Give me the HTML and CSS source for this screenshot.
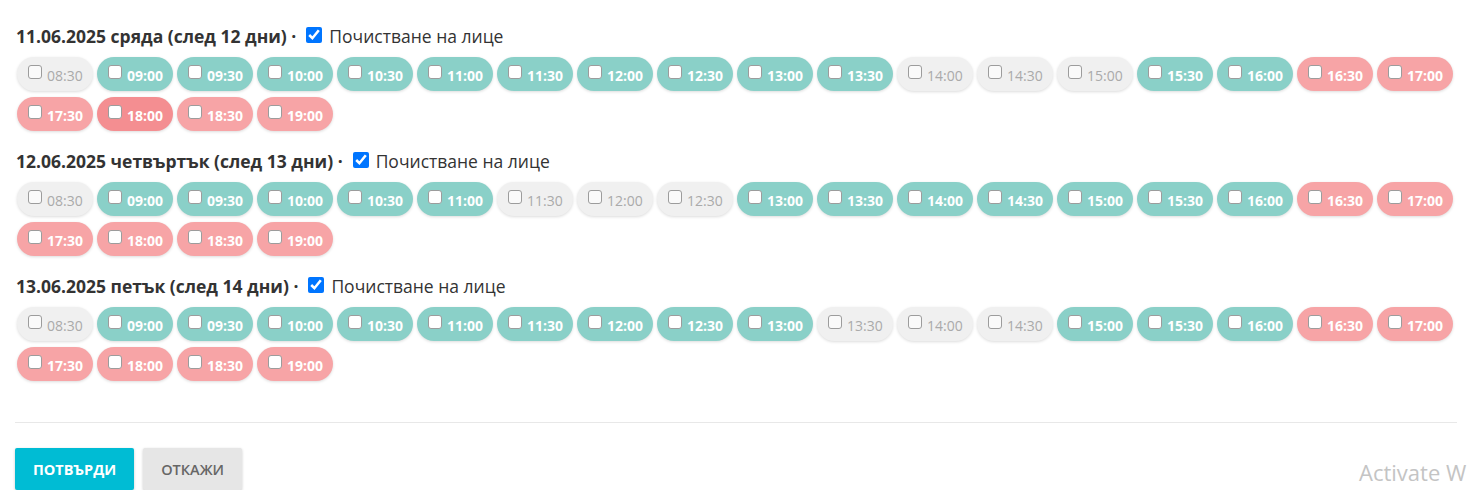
FILE: index.html
```html
<!DOCTYPE html>
<html lang="bg">
<head>
<meta charset="utf-8">
<title>Часове</title>
<link rel="stylesheet" href="styles.css">
</head>
<body>
<div class="page">
  <div class="day">
    <div class="day-head"><span class="date">11.06.2025 сряда (след 12 дни) ·</span><label class="service"><input type="checkbox" checked>Почистване на лице</label></div>
    <div class="slots">
      <label class="slot off"><input type="checkbox"><span>08:30</span></label>
      <label class="slot free"><input type="checkbox"><span>09:00</span></label>
      <label class="slot free"><input type="checkbox"><span>09:30</span></label>
      <label class="slot free"><input type="checkbox"><span>10:00</span></label>
      <label class="slot free"><input type="checkbox"><span>10:30</span></label>
      <label class="slot free"><input type="checkbox"><span>11:00</span></label>
      <label class="slot free"><input type="checkbox"><span>11:30</span></label>
      <label class="slot free"><input type="checkbox"><span>12:00</span></label>
      <label class="slot free"><input type="checkbox"><span>12:30</span></label>
      <label class="slot free"><input type="checkbox"><span>13:00</span></label>
      <label class="slot free"><input type="checkbox"><span>13:30</span></label>
      <label class="slot off"><input type="checkbox"><span>14:00</span></label>
      <label class="slot off"><input type="checkbox"><span>14:30</span></label>
      <label class="slot off"><input type="checkbox"><span>15:00</span></label>
      <label class="slot free"><input type="checkbox"><span>15:30</span></label>
      <label class="slot free"><input type="checkbox"><span>16:00</span></label>
      <label class="slot late"><input type="checkbox"><span>16:30</span></label>
      <label class="slot late"><input type="checkbox"><span>17:00</span></label>
      <label class="slot late"><input type="checkbox"><span>17:30</span></label>
      <label class="slot late hover"><input type="checkbox"><span>18:00</span></label>
      <label class="slot late"><input type="checkbox"><span>18:30</span></label>
      <label class="slot late"><input type="checkbox"><span>19:00</span></label>
    </div>
  </div>
  <div class="day">
    <div class="day-head"><span class="date">12.06.2025 четвъртък (след 13 дни) ·</span><label class="service"><input type="checkbox" checked>Почистване на лице</label></div>
    <div class="slots">
      <label class="slot off"><input type="checkbox"><span>08:30</span></label>
      <label class="slot free"><input type="checkbox"><span>09:00</span></label>
      <label class="slot free"><input type="checkbox"><span>09:30</span></label>
      <label class="slot free"><input type="checkbox"><span>10:00</span></label>
      <label class="slot free"><input type="checkbox"><span>10:30</span></label>
      <label class="slot free"><input type="checkbox"><span>11:00</span></label>
      <label class="slot off"><input type="checkbox"><span>11:30</span></label>
      <label class="slot off"><input type="checkbox"><span>12:00</span></label>
      <label class="slot off"><input type="checkbox"><span>12:30</span></label>
      <label class="slot free"><input type="checkbox"><span>13:00</span></label>
      <label class="slot free"><input type="checkbox"><span>13:30</span></label>
      <label class="slot free"><input type="checkbox"><span>14:00</span></label>
      <label class="slot free"><input type="checkbox"><span>14:30</span></label>
      <label class="slot free"><input type="checkbox"><span>15:00</span></label>
      <label class="slot free"><input type="checkbox"><span>15:30</span></label>
      <label class="slot free"><input type="checkbox"><span>16:00</span></label>
      <label class="slot late"><input type="checkbox"><span>16:30</span></label>
      <label class="slot late"><input type="checkbox"><span>17:00</span></label>
      <label class="slot late"><input type="checkbox"><span>17:30</span></label>
      <label class="slot late"><input type="checkbox"><span>18:00</span></label>
      <label class="slot late"><input type="checkbox"><span>18:30</span></label>
      <label class="slot late"><input type="checkbox"><span>19:00</span></label>
    </div>
  </div>
  <div class="day">
    <div class="day-head"><span class="date">13.06.2025 петък (след 14 дни) ·</span><label class="service"><input type="checkbox" checked>Почистване на лице</label></div>
    <div class="slots">
      <label class="slot off"><input type="checkbox"><span>08:30</span></label>
      <label class="slot free"><input type="checkbox"><span>09:00</span></label>
      <label class="slot free"><input type="checkbox"><span>09:30</span></label>
      <label class="slot free"><input type="checkbox"><span>10:00</span></label>
      <label class="slot free"><input type="checkbox"><span>10:30</span></label>
      <label class="slot free"><input type="checkbox"><span>11:00</span></label>
      <label class="slot free"><input type="checkbox"><span>11:30</span></label>
      <label class="slot free"><input type="checkbox"><span>12:00</span></label>
      <label class="slot free"><input type="checkbox"><span>12:30</span></label>
      <label class="slot free"><input type="checkbox"><span>13:00</span></label>
      <label class="slot off"><input type="checkbox"><span>13:30</span></label>
      <label class="slot off"><input type="checkbox"><span>14:00</span></label>
      <label class="slot off"><input type="checkbox"><span>14:30</span></label>
      <label class="slot free"><input type="checkbox"><span>15:00</span></label>
      <label class="slot free"><input type="checkbox"><span>15:30</span></label>
      <label class="slot free"><input type="checkbox"><span>16:00</span></label>
      <label class="slot late"><input type="checkbox"><span>16:30</span></label>
      <label class="slot late"><input type="checkbox"><span>17:00</span></label>
      <label class="slot late"><input type="checkbox"><span>17:30</span></label>
      <label class="slot late"><input type="checkbox"><span>18:00</span></label>
      <label class="slot late"><input type="checkbox"><span>18:30</span></label>
      <label class="slot late"><input type="checkbox"><span>19:00</span></label>
    </div>
  </div>
  <hr class="divider">
  <div class="actions">
    <button class="btn btn-primary" type="button">Потвърди</button>
    <button class="btn btn-default" type="button">Откажи</button>
  </div>
</div>
<div class="watermark">Activate W</div>
</body>
</html>
```
FILE: styles.css
```css
html {
  overflow: hidden;
}
body {
  margin: 0;
  font-family: "Open Sans", "Noto Sans", sans-serif;
  color: #333;
  background: #fff;
}
.page {
  padding: 24px 15px 0 15px;
  width: 1446px;
}
.day {
  margin-bottom: 15px;
}
.day-head {
  display: flex;
  align-items: center;
  height: 24px;
  font-size: 17.5px;
  line-height: 24px;
  margin-bottom: 6px;
  padding-left: 1px;
}
.date {
  font-weight: 700;
  color: #333;
}
.service {
  display: flex;
  align-items: center;
  margin-left: 10px;
  color: #333;
}
.service input {
  width: 16px;
  height: 16px;
  margin: 0 7px 2px 0;
}
.slots {
  display: flex;
  flex-wrap: wrap;
}
.slot {
  box-sizing: border-box;
  width: 76px;
  height: 34px;
  margin: 3px 2px;
  border-radius: 17px;
  display: flex;
  align-items: center;
  padding-left: 11px;
  font-size: 14px;
  font-weight: 700;
  color: #fff;
  box-shadow: 0 1px 3px rgba(0, 0, 0, 0.14);
}
.slot input {
  appearance: none;
  -webkit-appearance: none;
  box-sizing: border-box;
  width: 14px;
  height: 14px;
  margin: 0 5px 4px 0;
  border: 1px solid #9c9c9c;
  border-radius: 3px;
  background: #fff;
}
.slot span {
  padding-top: 3px;
}
.free {
  background: #8ad0c8;
}
.late {
  background: #f7a4a6;
}
.late.hover {
  background: #f48e91;
}
.off {
  background: #f0f0f0;
  color: #aaa;
  font-weight: 400;
}
.off input {
  background: #fafafa;
}
.divider {
  border: 0;
  border-top: 1px solid #e8e8e8;
  margin: 38px 4px 25px 0;
}
.actions {
  display: flex;
  gap: 9px;
}
.btn {
  font-family: "Open Sans", "Noto Sans", sans-serif;
  height: 42px;
  border: 0;
  border-radius: 2px;
  font-size: 14.5px;
  font-weight: 700;
  text-transform: uppercase;
  padding: 0 18px;
  box-shadow: 0 1px 3px rgba(0, 0, 0, 0.2);
}
.btn-primary {
  background: #00bcd4;
  color: #fff;
}
.btn-default {
  background: #e6e6e6;
  color: #666;
  font-weight: 600;
}
.watermark {
  position: absolute;
  left: 1359px;
  top: 456px;
  font-family: "Open Sans", "Noto Sans", sans-serif;
  font-size: 22px;
  line-height: 32px;
  color: #c4c4c4;
  white-space: nowrap;
}
```
